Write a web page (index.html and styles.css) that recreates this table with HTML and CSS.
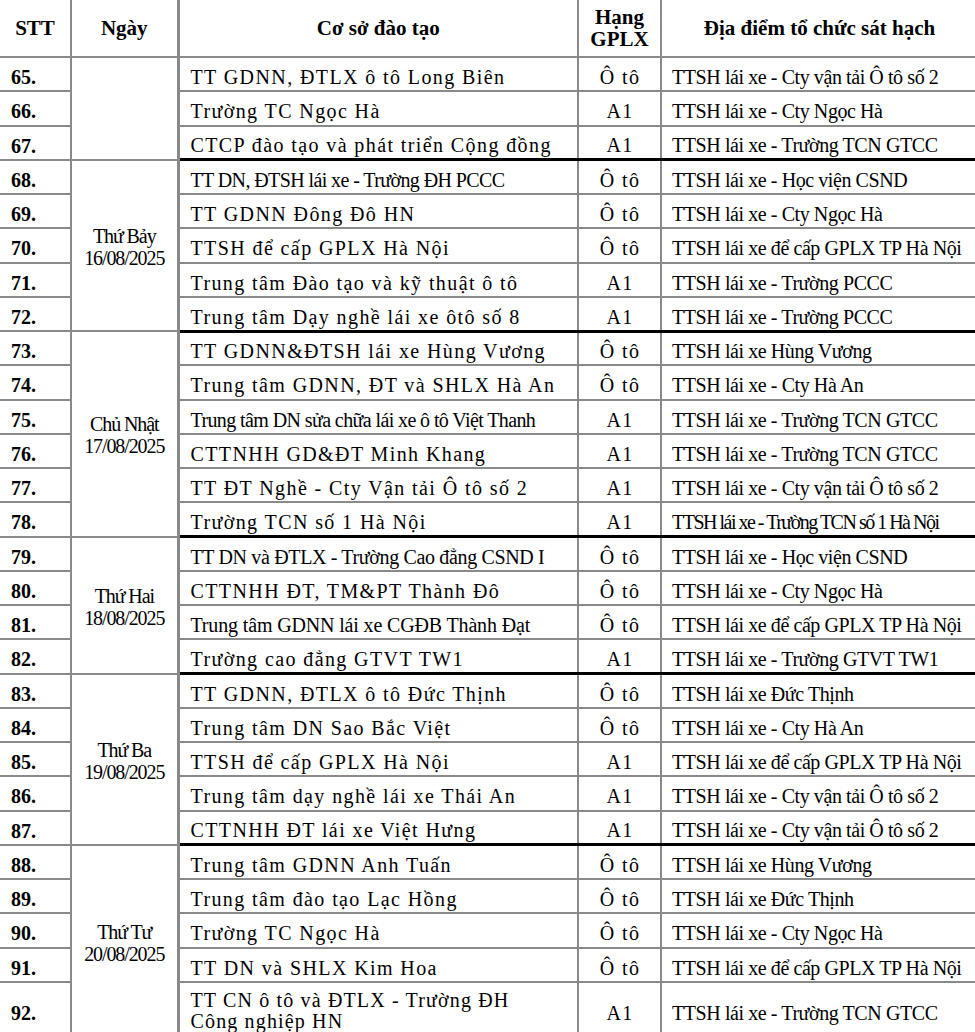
FILE: index.html
```html
<!DOCTYPE html>
<html lang="vi">
<head>
<meta charset="utf-8">
<title>Lịch sát hạch</title>
<link rel="stylesheet" href="styles.css">
</head>
<body>
<table class="sched">
  <colgroup>
    <col class="w-stt"><col class="w-day"><col class="w-name"><col class="w-rank"><col class="w-place">
  </colgroup>
  <thead>
    <tr class="head">
      <th class="stt">STT</th>
      <th class="day">Ngày</th>
      <th class="name">Cơ sở đào tạo</th>
      <th class="rank">Hạng<br>GPLX</th>
      <th class="place">Địa điểm tổ chức sát hạch</th>
    </tr>
  </thead>
  <tbody>
    <tr><td class="stt">65.</td><td class="day" rowspan="3"></td><td class="name">TT GDNN, ĐTLX ô tô Long Biên</td><td class="rank">Ô tô</td><td class="place">TTSH lái xe - Cty vận tải Ô tô số 2</td></tr>
    <tr><td class="stt">66.</td><td class="name">Trường TC Ngọc Hà</td><td class="rank">A1</td><td class="place">TTSH lái xe - Cty Ngọc Hà</td></tr>
    <tr><td class="stt">67.</td><td class="name">CTCP đào tạo và phát triển Cộng đồng</td><td class="rank">A1</td><td class="place">TTSH lái xe - Trường TCN GTCC</td></tr>

    <tr class="grp"><td class="stt">68.</td><td class="day" rowspan="5">Thứ Bảy<br>16/08/2025</td><td class="name tight">TT DN, ĐTSH lái xe - Trường ĐH PCCC</td><td class="rank">Ô tô</td><td class="place">TTSH lái xe - Học viện CSND</td></tr>
    <tr><td class="stt">69.</td><td class="name">TT GDNN Đông Đô HN</td><td class="rank">Ô tô</td><td class="place">TTSH lái xe - Cty Ngọc Hà</td></tr>
    <tr><td class="stt">70.</td><td class="name">TTSH để cấp GPLX Hà Nội</td><td class="rank">Ô tô</td><td class="place">TTSH lái xe để cấp GPLX TP Hà Nội</td></tr>
    <tr><td class="stt">71.</td><td class="name">Trung tâm Đào tạo và kỹ thuật ô tô</td><td class="rank">A1</td><td class="place">TTSH lái xe - Trường PCCC</td></tr>
    <tr><td class="stt">72.</td><td class="name">Trung tâm Dạy nghề lái xe ôtô số 8</td><td class="rank">A1</td><td class="place">TTSH lái xe - Trường PCCC</td></tr>

    <tr class="grp"><td class="stt">73.</td><td class="day" rowspan="6">Chủ Nhật<br>17/08/2025</td><td class="name">TT GDNN&amp;ĐTSH lái xe Hùng Vương</td><td class="rank">Ô tô</td><td class="place">TTSH lái xe Hùng Vương</td></tr>
    <tr><td class="stt">74.</td><td class="name">Trung tâm GDNN, ĐT và SHLX Hà An</td><td class="rank">Ô tô</td><td class="place">TTSH lái xe - Cty Hà An</td></tr>
    <tr><td class="stt">75.</td><td class="name tight">Trung tâm DN sửa chữa lái xe ô tô Việt Thanh</td><td class="rank">A1</td><td class="place">TTSH lái xe - Trường TCN GTCC</td></tr>
    <tr><td class="stt">76.</td><td class="name">CTTNHH GD&amp;ĐT Minh Khang</td><td class="rank">A1</td><td class="place">TTSH lái xe - Trường TCN GTCC</td></tr>
    <tr><td class="stt">77.</td><td class="name">TT ĐT Nghề - Cty Vận tải Ô tô số 2</td><td class="rank">A1</td><td class="place">TTSH lái xe - Cty vận tải Ô tô số 2</td></tr>
    <tr><td class="stt">78.</td><td class="name">Trường TCN số 1 Hà Nội</td><td class="rank">A1</td><td class="place squeeze">TTSH lái xe - Trường TCN số 1 Hà Nội</td></tr>

    <tr class="grp"><td class="stt">79.</td><td class="day" rowspan="4">Thứ Hai<br>18/08/2025</td><td class="name snug">TT DN và ĐTLX - Trường Cao đẳng CSND I</td><td class="rank">Ô tô</td><td class="place">TTSH lái xe - Học viện CSND</td></tr>
    <tr><td class="stt">80.</td><td class="name">CTTNHH ĐT, TM&amp;PT Thành Đô</td><td class="rank">Ô tô</td><td class="place">TTSH lái xe - Cty Ngọc Hà</td></tr>
    <tr><td class="stt">81.</td><td class="name plain">Trung tâm GDNN lái xe CGĐB Thành Đạt</td><td class="rank">Ô tô</td><td class="place">TTSH lái xe để cấp GPLX TP Hà Nội</td></tr>
    <tr><td class="stt">82.</td><td class="name">Trường cao đẳng GTVT TW1</td><td class="rank">A1</td><td class="place">TTSH lái xe - Trường GTVT TW1</td></tr>

    <tr class="grp"><td class="stt">83.</td><td class="day" rowspan="5">Thứ Ba<br>19/08/2025</td><td class="name">TT GDNN, ĐTLX ô tô Đức Thịnh</td><td class="rank">Ô tô</td><td class="place">TTSH lái xe Đức Thịnh</td></tr>
    <tr><td class="stt">84.</td><td class="name">Trung tâm DN Sao Bắc Việt</td><td class="rank">Ô tô</td><td class="place">TTSH lái xe - Cty Hà An</td></tr>
    <tr><td class="stt">85.</td><td class="name">TTSH để cấp GPLX Hà Nội</td><td class="rank">A1</td><td class="place">TTSH lái xe để cấp GPLX TP Hà Nội</td></tr>
    <tr><td class="stt">86.</td><td class="name">Trung tâm dạy nghề lái xe Thái An</td><td class="rank">A1</td><td class="place">TTSH lái xe - Cty vận tải Ô tô số 2</td></tr>
    <tr><td class="stt">87.</td><td class="name">CTTNHH ĐT lái xe Việt Hưng</td><td class="rank">A1</td><td class="place">TTSH lái xe - Cty vận tải Ô tô số 2</td></tr>

    <tr class="grp"><td class="stt">88.</td><td class="day" rowspan="5">Thứ Tư<br>20/08/2025</td><td class="name">Trung tâm GDNN Anh Tuấn</td><td class="rank">Ô tô</td><td class="place">TTSH lái xe Hùng Vương</td></tr>
    <tr><td class="stt">89.</td><td class="name">Trung tâm đào tạo Lạc Hồng</td><td class="rank">Ô tô</td><td class="place">TTSH lái xe Đức Thịnh</td></tr>
    <tr><td class="stt">90.</td><td class="name">Trường TC Ngọc Hà</td><td class="rank">Ô tô</td><td class="place">TTSH lái xe - Cty Ngọc Hà</td></tr>
    <tr><td class="stt">91.</td><td class="name">TT DN và SHLX Kim Hoa</td><td class="rank">Ô tô</td><td class="place">TTSH lái xe để cấp GPLX TP Hà Nội</td></tr>
    <tr class="tall"><td class="stt">92.</td><td class="name wrap">TT CN ô tô và ĐTLX - Trường ĐH<br>Công nghiệp HN</td><td class="rank">A1</td><td class="place">TTSH lái xe - Trường TCN GTCC</td></tr>
  </tbody>
</table>
</body>
</html>
```

FILE: styles.css
```css
html, body {
  margin: 0;
  padding: 0;
  background: #ffffff;
}

body {
  font-family: "Liberation Serif", "Times New Roman", serif;
  color: #000000;
  overflow: hidden;
}

.sched {
  border-collapse: collapse;
  table-layout: fixed;
  width: 977px;
}

.w-stt { width: 71px; }
.w-day { width: 107px; }
.w-name { width: 400px; }
.w-rank { width: 83px; }
.w-place { width: 316px; }

.sched th,
.sched td {
  border: 2px solid #8a8a8a;
  padding: 0;
  vertical-align: middle;
  white-space: nowrap;
  overflow: hidden;
}

.sched th {
  font-size: 21px;
  line-height: 22px;
  font-weight: bold;
  text-align: center;
  border-top: 0;
}

.head {
  height: 57px;
}

.sched tbody tr {
  height: 34.26px;
}

.sched td {
  font-size: 20px;
  line-height: 22px;
  padding-top: 6px;
}

.sched .stt {
  border-left: 0;
}

.sched .place {
  border-right: 0;
}

td.stt {
  font-weight: bold;
  padding-left: 11px;
  text-align: left;
}

td.day {
  text-align: center;
  letter-spacing: -1.1px;
  padding-top: 3px;
}

.sched .day {
  border-right: 3px solid #8a8a8a;
}

td.name {
  padding-left: 11px;
  letter-spacing: 1.4px;
}

td.name.tight { letter-spacing: -0.6px; }
td.name.snug { letter-spacing: -0.35px; }
td.name.plain { letter-spacing: -0.15px; }

td.name.wrap {
  letter-spacing: 1.15px;
  line-height: 21px;
  padding-top: 2px;
}

td.rank {
  text-align: center;
  letter-spacing: 1.4px;
  padding-left: 1px;
}

td.place {
  padding-left: 10px;
  letter-spacing: -0.42px;
}

td.place.squeeze { letter-spacing: -1.5px; }

.grp td.name,
.grp td.rank,
.grp td.place {
  border-top: 3px solid #000000;
}

.sched tbody tr.tall {
  height: 56px;
}
```
